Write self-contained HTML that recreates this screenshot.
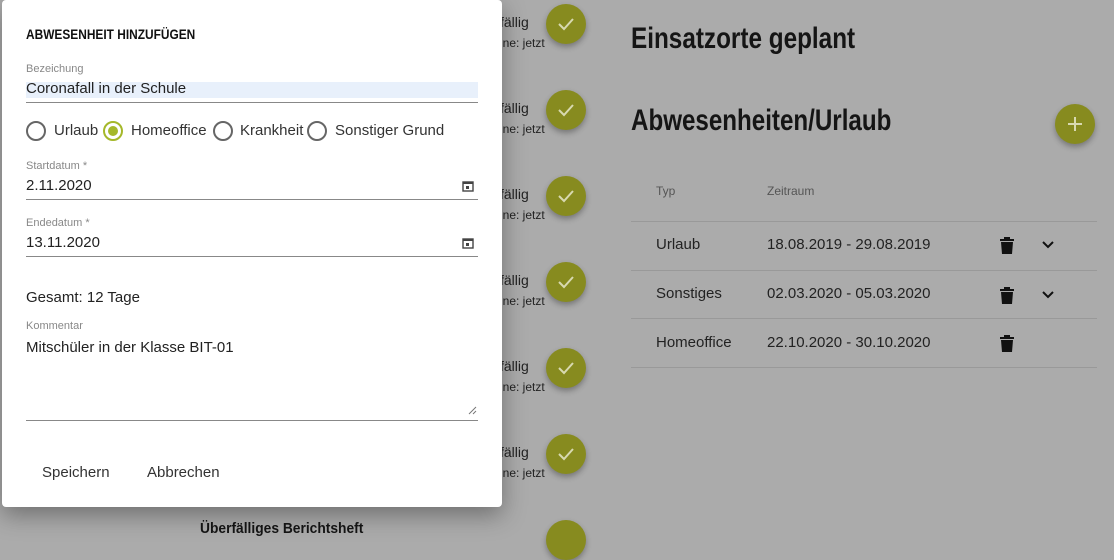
<!DOCTYPE html>
<html><head><meta charset="utf-8"><style>
*{margin:0;padding:0;box-sizing:border-box}
body{width:1114px;height:538px;overflow:hidden;background:#ababab;font-family:"Liberation Sans",sans-serif;color:#222;position:relative}
.a{position:absolute;white-space:nowrap}
.n{font-family:"Liberation Sans",sans-serif;font-weight:bold;color:#151515;transform-origin:0 0}
.chk{position:absolute;left:546px;width:40px;height:40px;border-radius:50%;background:#878b1f;box-shadow:0 3px 6px rgba(0,0,0,.3)}
.chk svg{position:absolute;left:10px;top:10px}
.f{position:absolute;left:500px;font-size:14px;color:#222}
.f2{position:absolute;left:500px;font-size:12px;color:#222}
.dlg{position:absolute;left:2px;top:0;width:500px;height:507px;background:#fff;border-radius:4px;box-shadow:0 8px 24px rgba(0,0,0,.35)}
.lbl{position:absolute;left:24px;font-size:11px;color:#888}
.val{position:absolute;left:24px;font-size:15px;color:#222}
.line{position:absolute;left:24px;width:452px;height:1px;background:#888}
.rad{position:absolute;width:20px;height:20px;border:2px solid #666;border-radius:50%}
.rl{position:absolute;font-size:15px;color:#333;top:122px}
.row{position:absolute;left:631px;width:466px;height:1px;background:#999}
.t{position:absolute;font-size:15px;color:#222}
.tr{position:absolute;left:999px;width:16px;height:18px}
</style></head><body>
<div class="a n" style="left:200px;top:-10px;font-size:15px;transform:scaleX(.92)">Überfälliges Berichtsheft</div>
<div class="a n" style="left:200px;top:520px;font-size:15px;transform:scaleX(.92)">Überfälliges Berichtsheft</div>

<div class="f" style="top:14px">fällig</div><div class="f2" style="top:36px">ine: jetzt</div>
<div class="f" style="top:100px">fällig</div><div class="f2" style="top:122px">ine: jetzt</div>
<div class="f" style="top:186px">fällig</div><div class="f2" style="top:208px">ine: jetzt</div>
<div class="f" style="top:272px">fällig</div><div class="f2" style="top:294px">ine: jetzt</div>
<div class="f" style="top:358px">fällig</div><div class="f2" style="top:380px">ine: jetzt</div>
<div class="f" style="top:444px">fällig</div><div class="f2" style="top:466px">ine: jetzt</div>

<div class="chk" style="top:4px"><svg width="20" height="20"><path d="M3 10l5 5 9-10" stroke="#d8d9b0" stroke-width="2" fill="none"/></svg></div>
<div class="chk" style="top:90px"><svg width="20" height="20"><path d="M3 10l5 5 9-10" stroke="#d8d9b0" stroke-width="2" fill="none"/></svg></div>
<div class="chk" style="top:176px"><svg width="20" height="20"><path d="M3 10l5 5 9-10" stroke="#d8d9b0" stroke-width="2" fill="none"/></svg></div>
<div class="chk" style="top:262px"><svg width="20" height="20"><path d="M3 10l5 5 9-10" stroke="#d8d9b0" stroke-width="2" fill="none"/></svg></div>
<div class="chk" style="top:348px"><svg width="20" height="20"><path d="M3 10l5 5 9-10" stroke="#d8d9b0" stroke-width="2" fill="none"/></svg></div>
<div class="chk" style="top:434px"><svg width="20" height="20"><path d="M3 10l5 5 9-10" stroke="#d8d9b0" stroke-width="2" fill="none"/></svg></div>
<div class="chk" style="top:520px"></div>

<div class="a n" style="left:631px;top:22px;font-size:30px;transform:scaleX(.81)">Einsatzorte geplant</div>
<div class="a n" style="left:631px;top:104px;font-size:30px;transform:scaleX(.805)">Abwesenheiten/Urlaub</div>
<div class="chk" style="left:1055px;top:104px"><svg width="20" height="20"><path d="M10 3v14M3 10h14" stroke="#d8d9b0" stroke-width="2"/></svg></div>

<div class="t" style="left:656px;top:184px;font-size:12px;color:#555">Typ</div>
<div class="t" style="left:767px;top:184px;font-size:12px;color:#555">Zeitraum</div>
<div class="row" style="top:221px"></div>
<div class="t" style="left:656px;top:236px">Urlaub</div><div class="t" style="left:767px;top:236px">18.08.2019 - 29.08.2019</div>
<div class="row" style="top:270px"></div>
<div class="t" style="left:656px;top:285px">Sonstiges</div><div class="t" style="left:767px;top:285px">02.03.2020 - 05.03.2020</div>
<div class="row" style="top:318px"></div>
<div class="t" style="left:656px;top:334px">Homeoffice</div><div class="t" style="left:767px;top:334px">22.10.2020 - 30.10.2020</div>
<div class="row" style="top:367px"></div>
<svg class="tr" style="top:236px" viewBox="0 0 16 18"><path d="M1 3h14v2H1zM5 1h6v2H5zM2 6h12l-1 12H3z" fill="#111"/></svg>
<svg class="tr" style="top:286px" viewBox="0 0 16 18"><path d="M1 3h14v2H1zM5 1h6v2H5zM2 6h12l-1 12H3z" fill="#111"/></svg>
<svg class="tr" style="top:334px" viewBox="0 0 16 18"><path d="M1 3h14v2H1zM5 1h6v2H5zM2 6h12l-1 12H3z" fill="#111"/></svg>
<svg class="a" style="left:1041px;top:240px" width="14" height="10"><path d="M2 2l5 5 5-5" stroke="#111" stroke-width="2" fill="none"/></svg>
<svg class="a" style="left:1041px;top:290px" width="14" height="10"><path d="M2 2l5 5 5-5" stroke="#111" stroke-width="2" fill="none"/></svg>

<div class="dlg">
<div class="a n" style="left:24px;top:26px;font-size:14px;color:#111;transform:scaleX(.85)">ABWESENHEIT HINZUFÜGEN</div>
<div class="lbl" style="top:63px">Bezeichung</div>
<div style="position:absolute;left:24px;top:82px;width:452px;height:16px;background:#e8f0fb"></div>
<div class="val" style="top:80px">Coronafall in der Schule</div>
<div class="line" style="top:102px"></div>

<div class="rad" style="left:24px;top:121px"></div><div class="rl" style="left:52px">Urlaub</div>
<div class="rad" style="left:101px;top:121px;border-color:#a5b82a"><div style="position:absolute;left:3px;top:3px;width:10px;height:10px;border-radius:50%;background:#a5b82a"></div></div><div class="rl" style="left:129px">Homeoffice</div>
<div class="rad" style="left:211px;top:121px"></div><div class="rl" style="left:238px">Krankheit</div>
<div class="rad" style="left:305px;top:121px"></div><div class="rl" style="left:333px">Sonstiger Grund</div>

<div class="lbl" style="top:160px">Startdatum *</div>
<div class="val" style="top:177px">2.11.2020</div>
<svg class="a" style="left:460px;top:180px" width="12" height="12"><rect x="1" y="2" width="10" height="9" fill="none" stroke="#444" stroke-width="1.4"/><rect x="1" y="2" width="10" height="2" fill="#444"/><rect x="4" y="6" width="3" height="3" fill="#444"/></svg>
<div class="line" style="top:199px"></div>
<div class="lbl" style="top:217px">Endedatum *</div>
<div class="val" style="top:234px">13.11.2020</div>
<svg class="a" style="left:460px;top:237px" width="12" height="12"><rect x="1" y="2" width="10" height="9" fill="none" stroke="#444" stroke-width="1.4"/><rect x="1" y="2" width="10" height="2" fill="#444"/><rect x="4" y="6" width="3" height="3" fill="#444"/></svg>
<div class="line" style="top:256px"></div>

<div class="val" style="top:289px">Gesamt: 12 Tage</div>
<div class="lbl" style="top:320px">Kommentar</div>
<div class="val" style="top:339px">Mitschüler in der Klasse BIT-01</div>
<svg class="a" style="left:466px;top:406px" width="9" height="9"><path d="M1 8L8 1M5 8L8 5" stroke="#777"/></svg>
<div class="line" style="top:420px"></div>

<div class="val" style="left:40px;top:464px;color:#333">Speichern</div>
<div class="val" style="left:145px;top:464px;color:#333">Abbrechen</div>
</div>
</body></html>
